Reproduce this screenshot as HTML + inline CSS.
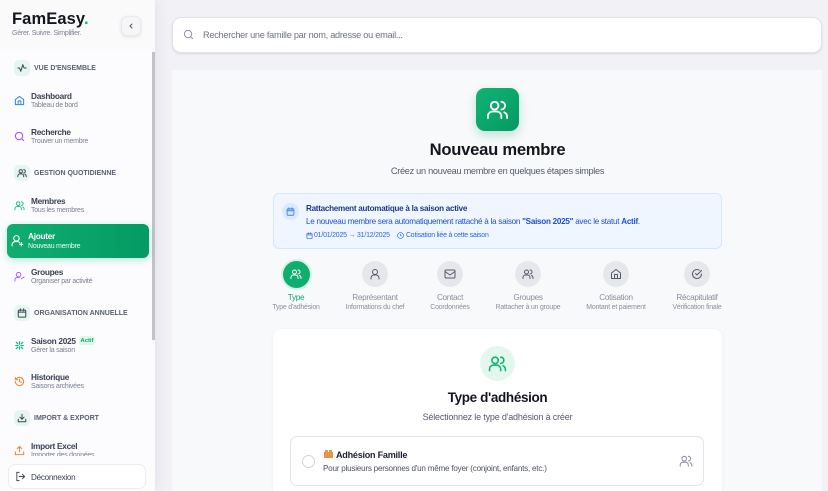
<!DOCTYPE html>
<html lang="fr"><head><meta charset="utf-8"><title>FamEasy</title>
<style>
*{box-sizing:border-box;margin:0;padding:0}
html,body{width:828px;height:491px;overflow:hidden;background:#f1f1f6;font-family:"Liberation Sans","Noto Sans CJK JP",sans-serif}
#w{position:absolute;left:0;top:0;width:828px;height:491px;overflow:hidden;background:#f1f1f6;filter:blur(.3px)}
.a{position:absolute;white-space:nowrap}
svg{position:absolute;fill:none;stroke-linecap:round;stroke-linejoin:round}
svg:not([stroke-width]){stroke-width:2}
.sec{font-size:7px;font-weight:700;color:#5b6072;left:34px}
.secb{position:absolute;left:14px;width:16px;height:16px;border-radius:5px;background:#e4f6ef}
.t{font-size:8.3px;font-weight:700;color:#3b4054;left:31px;letter-spacing:-.3px}
.s{font-size:7px;color:#7c8193;left:31px;letter-spacing:-.24px}
.st{font-size:8.2px;color:#8b8f9e;transform:translateX(-50%);letter-spacing:-.3px}
.sd{font-size:6.9px;color:#8b8f9e;transform:translateX(-50%);letter-spacing:-.18px}
.c{position:absolute;top:261px;width:26px;height:26px;border-radius:50%;background:#e6e7eb}
</style></head><body><div id="w">
<div class="a" style="left:0;top:0;width:155px;height:491px;background:#fcfcfe;box-shadow:2px 0 12px rgba(60,60,90,.08)"></div>
<div class="a" style="left:0;top:0;width:155px;height:52px;background:#fafafb"></div>
<div class="a" style="left:12px;top:10px;font-size:16.5px;font-weight:700;color:#14161f;letter-spacing:.1px">FamEasy<span style="color:#10b981">.</span></div>
<div class="a" style="left:12px;top:30px;font-size:7px;color:#7c8193;letter-spacing:-.24px">Gérer. Suivre. Simplifier.</div>
<div class="a" style="left:121px;top:16px;width:20px;height:20px;border-radius:6px;background:#f6f6f8;border:1px solid #e9e9ee;box-shadow:0 1px 3px rgba(0,0,0,.1)"></div>
<svg style="left:127px;top:22px" width="8" height="8" viewBox="0 0 8 8" stroke="#555a6c" stroke-width="1"><path d="M5 2 3 4l2 2"/></svg>
<div class="a" style="left:152px;top:52px;width:3px;height:288px;background:#c3c3c6"></div>

<div class="secb" style="top:60px"></div>
<svg style="left:17px;top:63px" width="10" height="10" viewBox="0 0 24 24" stroke="#3f4454" stroke-width="2.4"><path d="M2 12h4l3 8 5-16 3 8h5"/></svg>
<div class="a sec" style="top:65px">VUE D'ENSEMBLE</div>
<svg style="left:14px;top:95px" width="11" height="11" viewBox="0 0 24 24" stroke="#3b82f6" stroke-width="2.3"><path d="M3 10l9-7 9 7v11H3z"/><path d="M9 21v-8h6v8"/></svg>
<div class="a t" style="top:91px">Dashboard</div>
<div class="a s" style="top:102px">Tableau de bord</div>
<svg style="left:14px;top:131px" width="11" height="11" viewBox="0 0 24 24" stroke="#a855f7" stroke-width="2.4"><circle cx="11" cy="11" r="8"/><path d="m21 21-4-4"/></svg>
<div class="a t" style="top:127px">Recherche</div>
<div class="a s" style="top:138px">Trouver un membre</div>

<div class="secb" style="top:165px"></div>
<svg style="left:17px;top:168px" width="10" height="10" viewBox="0 0 24 24" stroke="#3f4454" stroke-width="2.4"><circle cx="9" cy="8" r="4"/><path d="M2 21v-2a5 5 0 0 1 5-5h4a5 5 0 0 1 5 5v2M16 4a4 4 0 0 1 0 8M22 21v-2a5 5 0 0 0-3-4"/></svg>
<div class="a sec" style="top:170px">GESTION QUOTIDIENNE</div>
<svg style="left:14px;top:200px" width="11" height="11" viewBox="0 0 24 24" stroke="#10b981"><circle cx="9" cy="8" r="4"/><path d="M2 21v-2a5 5 0 0 1 5-5h4a5 5 0 0 1 5 5v2M16 4a4 4 0 0 1 0 8M22 21v-2a5 5 0 0 0-3-4"/></svg>
<div class="a t" style="top:196px">Membres</div>
<div class="a s" style="top:207px">Tous les membres</div>
<div class="a" style="left:7px;top:224px;width:142px;height:34px;border-radius:6px;background:linear-gradient(90deg,#0fae6f,#059a64);box-shadow:0 2px 8px rgba(16,185,129,.3)"></div>
<svg style="left:11px;top:234px" width="13" height="13" viewBox="0 0 24 24" stroke="#fff"><circle cx="10" cy="8" r="5"/><path d="M2 22v-2a6 6 0 0 1 6-6h4a6 6 0 0 1 4 2M19 16v6M16 19h6"/></svg>
<div class="a t" style="left:28px;top:231px;color:#fff">Ajouter</div>
<div class="a s" style="left:28px;top:243px;color:#e8fbf3">Nouveau membre</div>
<svg style="left:14px;top:271px" width="11" height="11" viewBox="0 0 24 24" stroke="#a855f7"><circle cx="10" cy="8" r="5"/><path d="M2 22v-2a6 6 0 0 1 6-6h4M16 17l6-4"/></svg>
<div class="a t" style="top:267px">Groupes</div>
<div class="a s" style="top:278px">Organiser par activité</div>

<div class="secb" style="top:305px"></div>
<svg style="left:17px;top:308px" width="10" height="10" viewBox="0 0 24 24" stroke="#3f4454" stroke-width="2.4"><rect x="3" y="5" width="18" height="17" rx="2"/><path d="M8 2v5M16 2v5M3 10h18"/></svg>
<div class="a sec" style="top:310px">ORGANISATION ANNUELLE</div>
<svg style="left:14px;top:340px" width="11" height="11" viewBox="0 0 24 24" stroke="#10b981" stroke-width="2.8"><path d="M12 4v5M12 15v5M4 12h5M15 12h5M5 5l3 3M16 16l3 3M19 5l-3 3M8 16l-3 3"/></svg>
<div class="a t" style="top:336px">Saison 2025</div>
<div class="a" style="left:79px;top:336px;width:16px;height:9px;border-radius:3px;background:#dcf8ea;color:#10a56e;font-size:5.8px;font-weight:700;text-align:center;line-height:10px">Actif</div>
<div class="a s" style="top:347px">Gérer la saison</div>
<svg style="left:14px;top:376px" width="11" height="11" viewBox="0 0 24 24" stroke="#f08a3c" stroke-width="2.4"><path d="M3 12a9 9 0 1 0 3-6.7L3 8M3 3v5h5M12 7v5l4 2"/></svg>
<div class="a t" style="top:372px">Historique</div>
<div class="a s" style="top:383px">Saisons archivées</div>

<div class="secb" style="top:410px"></div>
<svg style="left:17px;top:413px" width="10" height="10" viewBox="0 0 24 24" stroke="#3f4454" stroke-width="2.4"><path d="M21 15v6H3v-6M7 10l5 5 5-5M12 15V3"/></svg>
<div class="a sec" style="top:415px">IMPORT &amp; EXPORT</div>
<svg style="left:14px;top:445px" width="11" height="11" viewBox="0 0 24 24" stroke="#f08a3c" stroke-width="2.4"><path d="M21 15v6H3v-6M17 8l-5-5-5 5M12 3v12"/></svg>
<div class="a t" style="top:441px">Import Excel</div>
<div class="a s" style="top:452px">Importer des données</div>

<div class="a" style="left:0;top:456px;width:155px;height:35px;background:#fcfcfd"></div>
<div class="a" style="left:8px;top:464px;width:138px;height:25px;border-radius:7px;background:#fff;border:1px solid #ececf1"></div>
<svg style="left:15px;top:471px" width="11" height="11" viewBox="0 0 24 24" stroke="#3f4454"><path d="M9 21H4V3h5M16 17l5-5-5-5M21 12H9"/></svg>
<div class="a" style="left:31px;top:473px;font-size:8.1px;color:#3b4054;letter-spacing:-.26px">Déconnexion</div>

<div class="a" style="left:172px;top:17px;width:650px;height:36px;background:#fff;border:1px solid #e2e2e9;border-radius:9px;box-shadow:0 1px 2px rgba(40,40,70,.12)"></div>
<svg style="left:183px;top:29px" width="11" height="11" viewBox="0 0 24 24" stroke="#8b8f9e"><circle cx="11" cy="11" r="8"/><path d="m21 21-4-4"/></svg>
<div class="a" style="left:203px;top:30px;font-size:9.2px;color:#6f7385;letter-spacing:-.27px">Rechercher une famille par nom, adresse ou email...</div>

<div class="a" style="left:172px;top:70px;width:650px;height:421px;background:#f8f9fb"></div>
<div class="a" style="left:476px;top:88px;width:43px;height:43px;border-radius:9px;background:linear-gradient(135deg,#10b374,#059a64);box-shadow:0 4px 10px rgba(16,150,100,.25)"></div>
<svg style="left:486px;top:98px" width="23" height="23" viewBox="0 0 24 24" stroke="#fff" stroke-width="1.9"><circle cx="9" cy="8" r="4"/><path d="M2 21v-2a5 5 0 0 1 5-5h4a5 5 0 0 1 5 5v2M16 4a4 4 0 0 1 0 8M22 21v-2a5 5 0 0 0-3-4"/></svg>
<div class="a" style="left:0;top:140px;width:995px;text-align:center;font-size:16.6px;font-weight:700;color:#14161f;letter-spacing:-.25px">Nouveau membre</div>
<div class="a" style="left:0;top:166px;width:995px;text-align:center;font-size:9.2px;color:#555a6c;letter-spacing:-.29px">Créez un nouveau membre en quelques étapes simples</div>

<div class="a" style="left:273px;top:193px;width:449px;height:56px;background:#eff6ff;border:1px solid #d6e6fb;border-radius:6px"></div>
<div class="a" style="left:282px;top:203px;width:17px;height:17px;border-radius:50%;background:#dbeafe"></div>
<svg style="left:286px;top:207px" width="9" height="9" viewBox="0 0 24 24" stroke="#3b82f6" stroke-width="2.4"><rect x="3" y="5" width="18" height="17" rx="2"/><path d="M8 2v5M16 2v5M3 10h18"/></svg>
<div class="a" style="left:306px;top:204px;font-size:8.1px;font-weight:700;color:#1e3a8a;letter-spacing:-.27px">Rattachement automatique à la saison active</div>
<div class="a" style="left:306px;top:217px;font-size:8.1px;color:#1d4ed8;letter-spacing:-.26px">Le nouveau membre sera automatiquement rattaché à la saison <b>"Saison 2025"</b> avec le statut <b>Actif</b>.</div>
<svg style="left:306px;top:232px" width="7" height="7" viewBox="0 0 24 24" stroke="#2563eb" stroke-width="2.4"><rect x="3" y="5" width="18" height="17" rx="2"/><path d="M8 2v5M16 2v5M3 10h18"/></svg>
<div class="a" style="left:314px;top:232px;font-size:6.9px;color:#2563eb;letter-spacing:-.17px">01/01/2025 → 31/12/2025</div>
<svg style="left:397px;top:232px" width="7" height="7" viewBox="0 0 24 24" stroke="#2563eb" stroke-width="2.4"><circle cx="12" cy="12" r="10"/><path d="M12 7v5l3 2"/></svg>
<div class="a" style="left:406px;top:232px;font-size:6.9px;color:#2563eb;letter-spacing:-.17px">Cotisation liée à cette saison</div>

<div class="a" style="left:282.5px;top:261px;width:27px;height:27px;border-radius:50%;background:#0fae6f;box-shadow:0 0 0 2px #d3f3e5"></div>
<svg style="left:290px;top:268px" width="12" height="12" viewBox="0 0 24 24" stroke="#fff"><circle cx="9" cy="8" r="4"/><path d="M2 21v-2a5 5 0 0 1 5-5h4a5 5 0 0 1 5 5v2M16 4a4 4 0 0 1 0 8M22 21v-2a5 5 0 0 0-3-4"/></svg>
<div class="a st" style="left:296px;top:293px;color:#10a56e">Type</div>
<div class="a sd" style="left:296px;top:304px">Type d'adhésion</div>

<div class="c" style="left:362px"></div>
<svg style="left:369px;top:268px" width="12" height="12" viewBox="0 0 24 24" stroke="#555a6c"><circle cx="12" cy="8" r="5"/><path d="M4 22v-2a6 6 0 0 1 6-6h4a6 6 0 0 1 6 6v2"/></svg>
<div class="a st" style="left:375px;top:293px">Représentant</div>
<div class="a sd" style="left:375px;top:304px">Informations du chef</div>

<div class="c" style="left:437px"></div>
<svg style="left:444px;top:268px" width="12" height="12" viewBox="0 0 24 24" stroke="#555a6c"><rect x="2" y="4" width="20" height="16" rx="2"/><path d="m2 7 10 7 10-7"/></svg>
<div class="a st" style="left:450px;top:293px">Contact</div>
<div class="a sd" style="left:450px;top:304px">Coordonnées</div>

<div class="c" style="left:515px"></div>
<svg style="left:522px;top:268px" width="12" height="12" viewBox="0 0 24 24" stroke="#555a6c"><circle cx="9" cy="8" r="4"/><path d="M2 21v-2a5 5 0 0 1 5-5h4a5 5 0 0 1 5 5v2M16 4a4 4 0 0 1 0 8M22 21v-2a5 5 0 0 0-3-4"/></svg>
<div class="a st" style="left:528px;top:293px">Groupes</div>
<div class="a sd" style="left:528px;top:304px">Rattacher à un groupe</div>

<div class="c" style="left:603px"></div>
<svg style="left:610px;top:268px" width="12" height="12" viewBox="0 0 24 24" stroke="#555a6c"><path d="M3 10l9-7 9 7v11H3z"/><path d="M9 21v-8h6v8"/></svg>
<div class="a st" style="left:616px;top:293px">Cotisation</div>
<div class="a sd" style="left:616px;top:304px">Montant et paiement</div>

<div class="c" style="left:684px"></div>
<svg style="left:691px;top:268px" width="12" height="12" viewBox="0 0 24 24" stroke="#555a6c"><path d="M21 12a9 9 0 1 1-4-7.5"/><path d="m9 11 3 3 9-9"/></svg>
<div class="a st" style="left:697px;top:293px">Récapitulatif</div>
<div class="a sd" style="left:697px;top:304px">Vérification finale</div>

<div class="a" style="left:273px;top:329px;width:449px;height:162px;background:#fff;border-radius:9px 9px 0 0;box-shadow:0 1px 4px rgba(40,40,70,.05)"></div>
<div class="a" style="left:480px;top:346px;width:35px;height:35px;border-radius:50%;background:#e3f7ef"></div>
<svg style="left:488px;top:354px" width="19" height="19" viewBox="0 0 24 24" stroke="#10b374"><circle cx="9" cy="8" r="4"/><path d="M2 21v-2a5 5 0 0 1 5-5h4a5 5 0 0 1 5 5v2M16 4a4 4 0 0 1 0 8M22 21v-2a5 5 0 0 0-3-4"/></svg>
<div class="a" style="left:0;top:390px;width:995px;text-align:center;font-size:13.5px;font-weight:700;color:#14161f;letter-spacing:-.36px">Type d'adhésion</div>
<div class="a" style="left:0;top:412px;width:995px;text-align:center;font-size:9px;color:#555a6c;letter-spacing:-.18px">Sélectionnez le type d'adhésion à créer</div>
<div class="a" style="left:290px;top:436px;width:414px;height:50px;background:#fff;border:1px solid #e4e4ea;border-radius:7px"></div>
<div class="a" style="left:302px;top:455px;width:13px;height:13px;border-radius:50%;border:1.5px solid #d3d4db"></div>
<svg style="left:324px;top:450px" width="9" height="8" viewBox="0 0 9 8"><rect x="0" y="2" width="9" height="6" fill="#e8924a"/><rect x="1" y="0" width="3" height="3" fill="#d9a04f"/><rect x="5" y="0" width="3" height="3" fill="#d9a04f"/></svg>
<div class="a" style="left:336px;top:450px;font-size:9.1px;font-weight:700;color:#1d2030;letter-spacing:-.26px">Adhésion Famille</div>
<div class="a" style="left:323px;top:464px;font-size:8.1px;color:#4d5264;letter-spacing:-.22px">Pour plusieurs personnes d'un même foyer (conjoint, enfants, etc.)</div>
<svg style="left:679px;top:454px" width="14" height="14" viewBox="0 0 24 24" stroke="#8b8f9e" stroke-width="1.8"><circle cx="9" cy="8" r="4"/><path d="M2 21v-2a5 5 0 0 1 5-5h4a5 5 0 0 1 5 5v2M16 4a4 4 0 0 1 0 8M22 21v-2a5 5 0 0 0-3-4"/></svg>
</div></body></html>
